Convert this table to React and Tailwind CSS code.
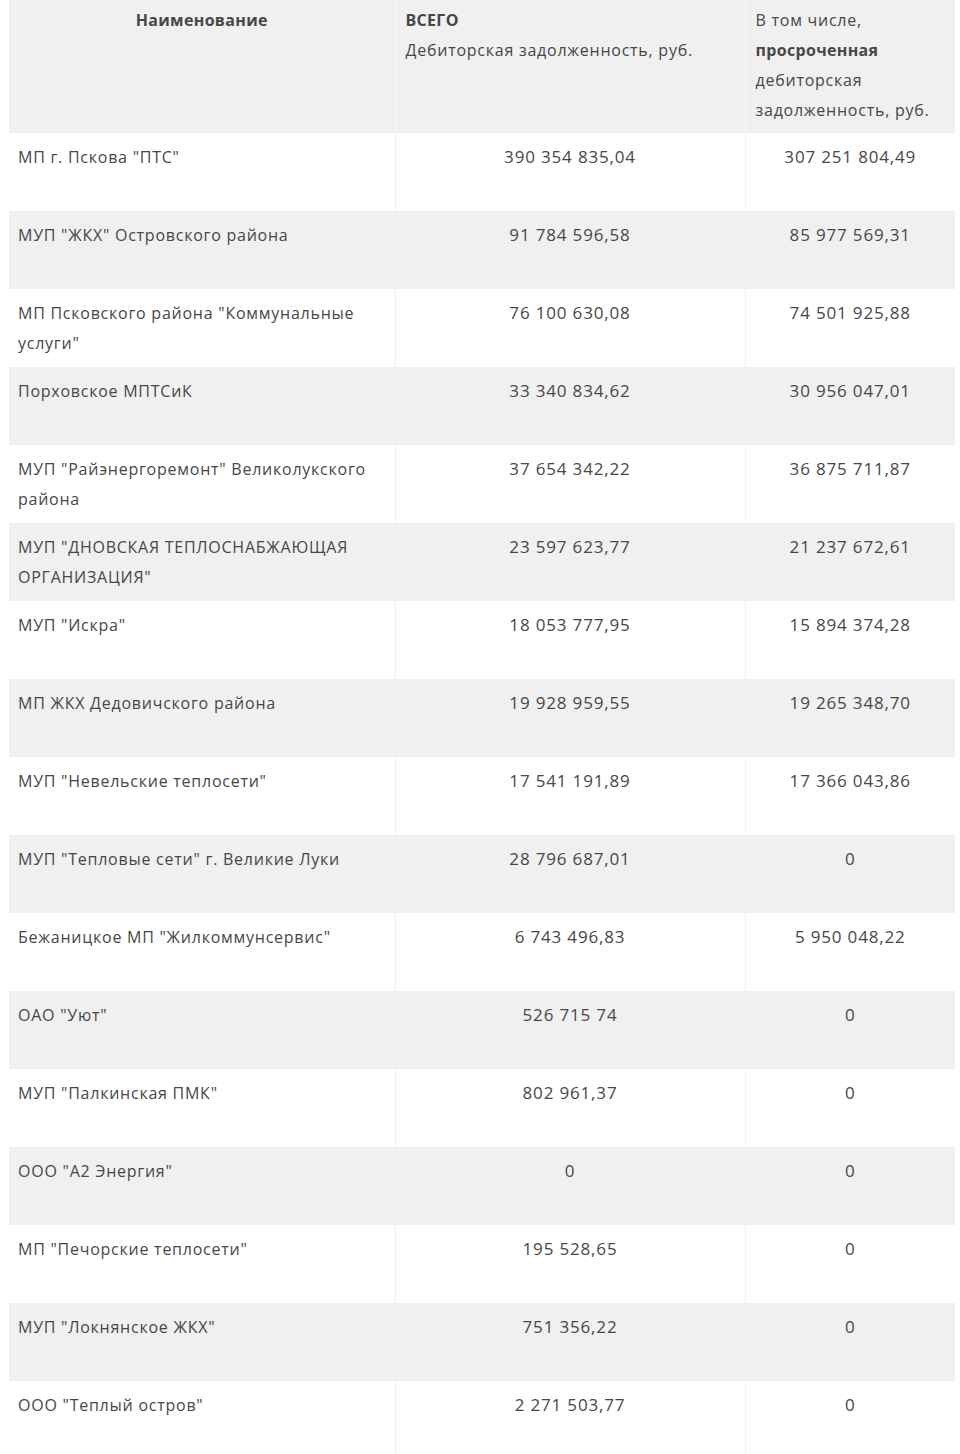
import React from 'react';

const rows = [
  ['МП г. Пскова "ПТС"', '390 354 835,04', '307 251 804,49'],
  ['МУП "ЖКХ" Островского района', '91 784 596,58', '85 977 569,31'],
  ['МП Псковского района "Коммунальные услуги"', '76 100 630,08', '74 501 925,88'],
  ['Порховское МПТСиК', '33 340 834,62', '30 956 047,01'],
  ['МУП "Райэнергоремонт" Великолукского района', '37 654 342,22', '36 875 711,87'],
  ['МУП "ДНОВСКАЯ ТЕПЛОСНАБЖАЮЩАЯ ОРГАНИЗАЦИЯ"', '23 597 623,77', '21 237 672,61'],
  ['МУП "Искра"', '18 053 777,95', '15 894 374,28'],
  ['МП ЖКХ Дедовичского района', '19 928 959,55', '19 265 348,70'],
  ['МУП "Невельские теплосети"', '17 541 191,89', '17 366 043,86'],
  ['МУП "Тепловые сети" г. Великие Луки', '28 796 687,01', '0'],
  ['Бежаницкое МП "Жилкоммунсервис"', '6 743 496,83', '5 950 048,22'],
  ['ОАО "Уют"', '526 715 74', '0'],
  ['МУП "Палкинская ПМК"', '802 961,37', '0'],
  ['ООО "А2 Энергия"', '0', '0'],
  ['МП "Печорские теплосети"', '195 528,65', '0'],
  ['МУП "Локнянское ЖКХ"', '751 356,22', '0'],
  ['ООО "Теплый остров"', '2 271 503,77', '0'],
];

export default function App() {
  return (
    <div className="min-h-screen bg-white pl-[9px] text-[#474747] font-['Open_Sans',sans-serif] text-[16px] leading-[30px] tracking-[0.047em]">
      <table className="w-[946px] border-collapse table-fixed">
        <colgroup>
          <col className="w-[386px]" />
          <col className="w-[350px]" />
          <col className="w-[210px]" />
        </colgroup>
        <thead>
          <tr className="bg-[#f0f0f0] h-[133px] align-top">
            <th className="px-[10px] pt-[5px] text-center font-bold tracking-[0.02em]">Наименование</th>
            <th className="border-l border-[#f7f7f7] px-[10px] pt-[5px] text-left font-normal">
              <div className="font-bold tracking-[0.02em]">ВСЕГО</div>
              <div>Дебиторская задолженность, руб.</div>
            </th>
            <th className="border-l border-[#f7f7f7] px-[10px] pt-[5px] text-left font-normal">
              <div>В том числе,</div>
              <div className="font-bold tracking-[0.02em]">просроченная</div>
              <div>дебиторская</div>
              <div>задолженность, руб.</div>
            </th>
          </tr>
        </thead>
        <tbody>
          {rows.map((r, i) => (
            <tr key={i} className={(i % 2 === 0 ? 'bg-white' : 'bg-[#f0f0f0]') + ' h-[78px] align-top'}>
              <td className="px-[9px] pt-[9px]">{r[0]}</td>
              <td className="border-l border-[#f0f0f0] px-[10px] pt-[9px] text-center text-[17px] tracking-[0.049em]">{r[1]}</td>
              <td className="border-l border-[#f0f0f0] px-[10px] pt-[9px] text-center text-[17px] tracking-[0.049em]">{r[2]}</td>
            </tr>
          ))}
        </tbody>
      </table>
    </div>
  );
}
